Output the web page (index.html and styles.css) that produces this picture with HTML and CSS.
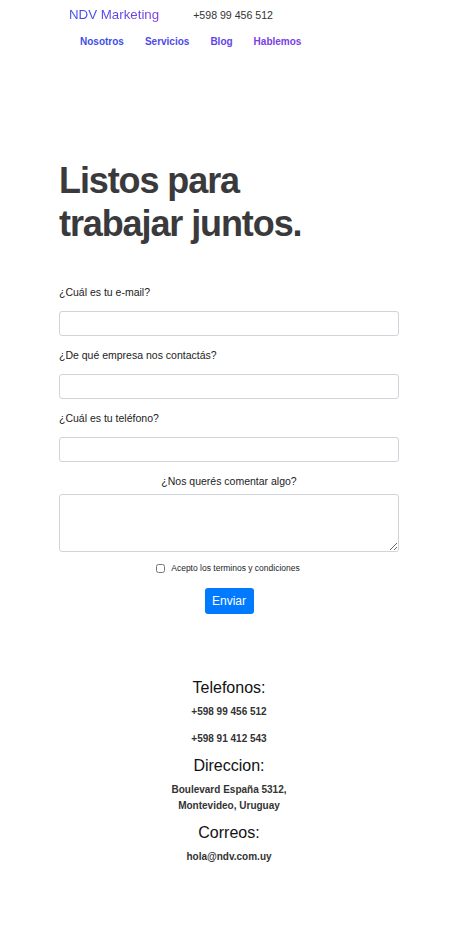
FILE: index.html
```html
<!DOCTYPE html>
<html lang="es">
<head>
<meta charset="utf-8">
<title>NDV Marketing</title>
<link rel="stylesheet" href="styles.css">
</head>
<body>
<header class="header">
  <div class="topbar">
    <a class="brand" href="#">NDV Marketing</a>
    <span class="phone">+598 99 456 512</span>
  </div>
  <nav class="nav">
    <a class="nav-link" href="#">Nosotros</a>
    <a class="nav-link" href="#">Servicios</a>
    <a class="nav-link" href="#">Blog</a>
    <a class="nav-link" href="#">Hablemos</a>
  </nav>
</header>
<main class="main">
  <h1 class="title">Listos para<br>trabajar juntos.</h1>
  <form class="form">
    <label class="label">¿Cuál es tu e-mail?</label>
    <input class="input" type="email">
    <label class="label">¿De qué empresa nos contactás?</label>
    <input class="input" type="text">
    <label class="label">¿Cuál es tu teléfono?</label>
    <input class="input" type="tel">
    <label class="label center">¿Nos querés comentar algo?</label>
    <textarea class="textarea"></textarea>
    <div class="check-row">
      <input class="check" type="checkbox" id="terms">
      <label class="check-label" for="terms">Acepto los terminos y condiciones</label>
    </div>
    <div class="btn-row"><button class="btn" type="button">Enviar</button></div>
  </form>
  <section class="contact">
    <h3 class="c-title">Telefonos:</h3>
    <p class="c-text">+598 99 456 512</p>
    <p class="c-text">+598 91 412 543</p>
    <h3 class="c-title">Direccion:</h3>
    <p class="c-text">Boulevard España 5312,<br>Montevideo, Uruguay</p>
    <h3 class="c-title">Correos:</h3>
    <p class="c-text">hola@ndv.com.uy</p>
  </section>
</main>
</body>
</html>
```
FILE: styles.css
```css
* { box-sizing: border-box; }
body {
  margin: 0;
  font-family: "Liberation Sans", Arial, sans-serif;
  color: #212529;
  background: #fff;
}
a { text-decoration: none; }
.header { padding: 0 0 0 69px; }
.topbar {
  display: flex;
  align-items: center;
  height: 29px;
  gap: 34px;
}
.brand {
  font-size: 13.3px;
  background: linear-gradient(90deg, #3d4fe6 0%, #7b3de6 100%);
  -webkit-background-clip: text;
  background-clip: text;
  color: transparent;
}
.phone { font-size: 10.6px; color: #333; }
.nav {
  display: flex;
  gap: 21px;
  padding-left: 11px;
  height: 24px;
  align-items: center;
}
.nav-link {
  font-size: 10px;
  font-weight: bold;
}
.nav-link:nth-child(1) { color: #3f4ee8; }
.nav-link:nth-child(2) { color: #4f49ea; }
.nav-link:nth-child(3) { color: #6443ea; }
.nav-link:nth-child(4) { color: #7a3de8; }
.main { padding: 0 55px 0 59px; }
.title {
  margin: 106px 0 0;
  font-size: 36px;
  line-height: 43px;
  font-weight: bold;
  letter-spacing: -1.1px;
  color: #3a3a3c;
}
.form {
  display: flex;
  flex-direction: column;
  margin-top: 40px;
}
.label {
  font-size: 10.5px;
  color: #222;
  line-height: 14px;
  margin-bottom: 12px;
}
.label.center { text-align: center; margin-bottom: 6px; }
.input {
  height: 25px;
  border: 1px solid #ced4da;
  border-radius: 3px;
  margin: 0 0 12px;
  font: inherit;
}
.textarea {
  height: 58px;
  border: 1px solid #ced4da;
  border-radius: 3px;
  margin: 0 0 11px;
  font: inherit;
  resize: vertical;
}
.check-row {
  display: flex;
  align-items: center;
  justify-content: center;
  gap: 6px;
  font-size: 8.5px;
  margin-left: -2px;
}
.check { width: 9px; height: 9px; margin: 0; }
.btn-row { display: flex; justify-content: center; margin-top: 15px; }
.btn {
  background: #007bff;
  color: #fff;
  border: none;
  border-radius: 3px;
  font-family: inherit;
  font-size: 12px;
  width: 49px;
  height: 26px;
  padding: 0;
}
.contact {
  text-align: center;
  margin-top: 65px;
  padding-bottom: 60px;
}
.c-title {
  font-size: 16px;
  font-weight: normal;
  margin: 0 0 7px;
  color: #111;
}
.c-text + .c-title { margin-top: -1px; }
.c-text {
  font-size: 10px;
  font-weight: bold;
  color: #333;
  margin: 0 0 11px;
  line-height: 16px;
}
```
